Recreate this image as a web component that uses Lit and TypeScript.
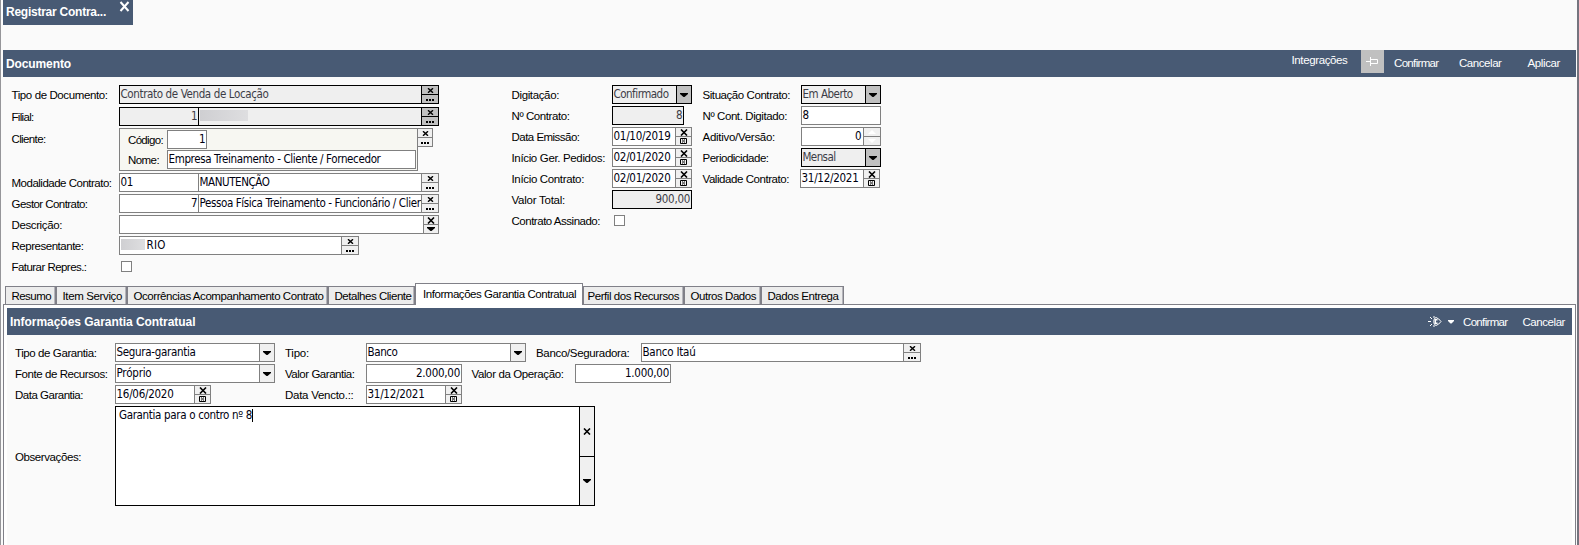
import { LitElement, html, css, svg, nothing } from "lit";
import { customElement, property } from "lit/decorators.js";
import { classMap } from "lit/directives/class-map.js";

/* Text run tracked so that it spans a given width. */
@customElement("fit-text")
class FitText extends LitElement {
  static styles = css`
    :host { display: inline-block; white-space: pre; flex: none; }
    .run { display: inline-block; white-space: pre; }
  `;
  @property() text = "";
  @property({ type: Number }) w = 0;
  updated() {
    const run = this.renderRoot.querySelector(".run") as HTMLElement;
    run.style.letterSpacing = "0px";
    const natural = run.getBoundingClientRect().width;
    if (this.w && natural) {
      run.style.letterSpacing = `${(this.w - natural) / this.text.length}px`;
    }
  }
  render() {
    return html`<span class="run">${this.text}</span>`;
  }
}

const ICONS: Record<string, unknown> = {
  xs: svg`<svg width="7" height="5" viewBox="0 0 7 5"><path d="M1 .3L6 4.7M6 .3L1 4.7" stroke="#000" stroke-width="1.5"/></svg>`,
  x: svg`<svg width="8" height="7" viewBox="0 0 8 7"><path d="M1 .5L7 6.5M7 .5L1 6.5" stroke="#000" stroke-width="1.6"/></svg>`,
  dots: svg`<svg width="8" height="6" viewBox="0 0 8 6"><path d="M0 3h2v2H0zM3 3h2v2H3zM6 3h2v2H6z"/></svg>`,
  down: svg`<svg width="8" height="4" viewBox="0 0 8 4"><path d="M0 0h8v1L4.5 4h-1L0 1z"/></svg>`,
  cal: svg`<svg width="7" height="6" viewBox="0 0 7 6"><path d="M.5 .5h6v5h-6z" fill="none" stroke="#000"/><path d="M2 1.5h1v1H2zM4 1.5h1v1H4zM3 2.5h1v1H3zM2 3.5h1v1H2zM4 3.5h1v1H4z"/></svg>`,
  up0: svg`<svg width="8" height="4" viewBox="0 0 8 4"><path d="M0 4L4 0l4 4z" fill="#fff"/></svg>`,
  down0: svg`<svg width="8" height="4" viewBox="0 0 8 4"><path d="M0 0L4 4l4-4z" fill="#fff"/></svg>`,
};

const BUTTONS: Record<string, string[]> = {
  lookup: ["xs", "dots"],
  date: ["x", "cal"],
  combo: ["down"],
  list: ["x", "down"],
  spin: ["up0", "down0"],
};

/* Width of each button stack, its left rule included. */
const STACK: Record<string, number> = { lookup: 17, date: 16, combo: 15, list: 15, spin: 17 };

@customElement("ux-field")
class UxField extends LitElement {
  static styles = css`
    :host { display: block; flex: none; --line: #808080; --face: #f0f0f0; }
    .box { box-sizing: border-box; height: 19px; display: flex; border: 1px solid var(--line); background: #fff;
      font: 11.5px/17px "DejaVu Sans Condensed", "DejaVu Sans", sans-serif; font-stretch: condensed; color: #000010; }
    .ro { --line: #000; --face: #c0c0c0; background: #efefef; color: #3c3c46; }
    .cell { flex: 1; min-width: 0; overflow: hidden; padding: 0 1px 0 0.5px; display: flex; }
    .code { flex: none; box-sizing: border-box; border-right: 1px solid var(--line); }
    .end { justify-content: flex-end; }
    .btns { flex: none; box-sizing: border-box; display: flex; flex-direction: column; gap: 1px; background: var(--line); border-left: 1px solid var(--line); }
    .btn { flex: 1; background: var(--face); display: flex; align-items: center; justify-content: center; min-height: 0; overflow: hidden; }
    .btn svg { flex: none; }
    .mask { flex: none; background: linear-gradient(90deg, #cfcfd2, #dedee0); height: 11px; margin: 2px 2px 0 0; }
  `;
  @property({ type: Number }) width = 80;
  @property() buttons = "";
  @property({ type: Boolean }) ro = false;
  @property({ type: Boolean }) end = false;
  @property() value = "";
  @property({ type: Number }) w = 0;
  @property() code = "";
  @property({ type: Boolean }) codeend = false;
  @property({ type: Number }) cw = 0;
  @property({ type: Number }) mask = 0;
  render() {
    return html`<div class=${classMap({ box: true, ro: this.ro })} style="width:${this.width}px">
      ${this.code
        ? html`<div class=${classMap({ cell: true, code: true, end: this.codeend })} style="width:79px"><fit-text .text=${this.code} .w=${this.cw}></fit-text></div>`
        : nothing}
      <div class=${classMap({ cell: true, end: this.end })}>
        ${this.mask ? html`<span class="mask" style="width:${this.mask}px"></span>` : nothing}
        ${this.value ? html`<fit-text .text=${this.value} .w=${this.w}></fit-text>` : nothing}
      </div>
      ${this.buttons
        ? html`<div class="btns" style="width:${STACK[this.buttons]}px">${BUTTONS[this.buttons].map((b) => html`<div class="btn">${ICONS[b]}</div>`)}</div>`
        : nothing}
    </div>`;
  }
}

@customElement("app-root")
class AppRoot extends LitElement {
  static styles = css`
    :host { display: block; width: 1579px; height: 545px; overflow: hidden; background: #fafafa;
      font: 11.5px/14px "Liberation Sans", Arial, sans-serif; color: #000; }
    .window { box-sizing: border-box; height: 545px; border-left: 1px solid #959599; border-right: 2px solid #74747e; padding-left: 2px; display: flex; flex-direction: column; }
    .doctab { width: 130px; height: 25px; box-sizing: border-box; background: #485a74; color: #fff; font-weight: bold; font-size: 12px; padding: 5px 0 0 3px; display: flex; justify-content: space-between; }
    .close { margin: -4px 3px 0 0; }
    .bar { height: 27px; flex: none; background: #485a74; color: #fff; display: flex; align-items: center; }
    .main { margin: 25px 1px 0 0; padding-left: 3px; }
    .title { font-weight: bold; font-size: 12px; }
    .actions { margin-left: auto; display: flex; align-items: center; height: 27px; }
    .raised { margin-bottom: 6px; }
    .pin { width: 23px; height: 23px; background: #c0c0c0; display: flex; align-items: center; justify-content: center; align-self: flex-start; margin: 0 10.5px 0 13px; }
    .gap { margin-left: 20.5px; }
    .gap2 { margin-left: 26px; margin-right: 16px; }
    .main .actions { padding-bottom: 1px; box-sizing: border-box; }
    .form { display: grid; grid-template-columns: 500px 191px 1fr; padding: 8px 0 0 8.5px; height: 193px; flex: none; box-sizing: border-box; }
    .col { display: flex; flex-direction: column; gap: 2px; }
    .row { display: flex; height: 19px; align-items: flex-start; }
    .label { flex: none; padding-top: 3px; }
    .shift { margin-left: -1px; }
    .gap3 { margin-top: 1px; }
    .client { height: 43px; }
    .client > .label { padding-top: 4px; }
    .group { width: 299px; height: 43px; box-sizing: border-box; border: 1px solid #808080; background: #f7f7f2; padding: 1px 1px 0 8px; display: flex; flex-direction: column; gap: 1px; }
    .groupbtns { width: 15px; height: 19px; box-sizing: border-box; border: 1px solid #808080; border-left: 0; background: #808080; display: grid; grid-template-rows: 1fr 1fr; gap: 1px; }
    .gbtn { background: #f0f0f0; display: flex; align-items: center; justify-content: center; min-height: 0; overflow: hidden; }
    .check { width: 11px; height: 11px; box-sizing: border-box; border: 1px solid #808080; background: #fff; margin: 4px 0 0 2px; }
    .tabs { display: flex; padding-left: 2px; height: 21px; align-items: flex-end; margin-top: 13px; position: relative; flex: none; }
    .tab { box-sizing: border-box; height: 18px; border: 1px solid #808088; border-bottom: 0; box-shadow: inset -1px 0 #b4b4ba; background: #ececec; padding: 2px 0 0 5.5px; }
    .tight { padding-left: 3.5px; }
    .active { height: 22px; margin-bottom: -1px; background: #fff; box-shadow: none; padding: 3px 0 0 7px; }
    .panel { flex: 1; border: 1px solid #808088; border-bottom: 0; background: #fff; padding: 3px 3px 0 3px; margin-right: 1px; display: flex; flex-direction: column; min-height: 0; }
    .panel .bar { padding-left: 3px; }
    .body { flex: 1; background: #fafafa; padding: 8px 0 0 8px; display: flex; flex-direction: column; gap: 2px; min-height: 0; }
    .sun { margin-right: 6px; }
    .caret { margin-right: 9px; }
    .gap4 { margin-left: 15px; margin-right: 7px; }
    .note { display: flex; align-items: flex-start; }
    .note .label { padding-top: 44px; }
    .area { box-sizing: border-box; width: 480px; height: 100px; border: 1px solid #000; background: #fff; display: grid; grid-template-columns: 1fr 15px;
      font: 11.5px/15px "DejaVu Sans Condensed", "DejaVu Sans", sans-serif; font-stretch: condensed; color: #000010; }
    .text { padding: 1px 0 0 3px; display: flex; }
    .cursor { width: 1px; height: 13px; background: #000; margin-top: 1px; }
    .side { border-left: 1px solid #000; background: #000; display: grid; grid-template-rows: 49px 1fr; gap: 1px; }
  `;

  label(text: string, w: number, col: number) {
    return html`<span class="label" style="width:${col}px"><fit-text .text=${text} .w=${w}></fit-text></span>`;
  }
  tab(text: string, tw: number, w: number, active = false, tight = false) {
    return html`<div class=${classMap({ tab: true, active, tight })} style="width:${w}px"><fit-text .text=${text} .w=${tw}></fit-text></div>`;
  }
  fit(text: string, w: number) {
    return html`<fit-text .text=${text} .w=${w}></fit-text>`;
  }

  render() {
    return html`<div class="window">
      <div class="doctab">${this.fit("Registrar Contra...", 100)}
        <svg class="close" width="11" height="11" viewBox="0 0 11 11"><path d="M1.5 1L9.5 10M9.5 1L1.5 10" stroke="#fff" stroke-width="2"/></svg>
      </div>
      <div class="bar main">
        <span class="title">${this.fit("Documento", 65)}</span>
        <div class="actions">
          <span class="raised">${this.fit("Integrações", 56)}</span>
          <span class="pin"><svg width="12" height="9" viewBox="0 0 12 9"><path d="M0 4.5h4.5M4.5 0v9M4.5 2.5h7v4h-7" fill="none" stroke="#fff"/></svg></span>
          ${this.fit("Confirmar", 44.5)}
          <span class="gap">${this.fit("Cancelar", 42.5)}</span>
          <span class="gap2">${this.fit("Aplicar", 32.5)}</span>
        </div>
      </div>

      <div class="form">
        <div class="col">
          <div class="row">${this.label("Tipo de Documento:", 96, 107.5)}<ux-field ro width="320" buttons="lookup" value="Contrato de Venda de Locação" w="148"></ux-field></div>
          <div class="row gap3">${this.label("Filial:", 22, 107.5)}<ux-field ro width="320" buttons="lookup" code="1" codeend cw="6" mask="48"></ux-field></div>
          <div class="row client">${this.label("Cliente:", 34, 107.5)}
            <div class="group">
              <div class="row">${this.label("Código:", 35, 39)}<ux-field width="40" end value="1" w="6"></ux-field></div>
              <div class="row">${this.label("Nome:", 31, 39)}<ux-field width="249" value="Empresa Treinamento - Cliente / Fornecedor" w="212"></ux-field></div>
            </div>
            <div class="groupbtns"><div class="gbtn">${ICONS.xs}</div><div class="gbtn">${ICONS.dots}</div></div>
          </div>
          <div class="row">${this.label("Modalidade Contrato:", 100, 107.5)}<ux-field width="320" buttons="lookup" code="01" cw="12.5" value="MANUTENÇÃO" w="70"></ux-field></div>
          <div class="row">${this.label("Gestor Contrato:", 76, 107.5)}<ux-field width="320" buttons="lookup" code="7" codeend cw="6" value="Pessoa Física Treinamento - Funcionário / Cliente" w="233"></ux-field></div>
          <div class="row">${this.label("Descrição:", 50.5, 107.5)}<ux-field width="320" buttons="list"></ux-field></div>
          <div class="row">${this.label("Representante:", 72, 107.5)}<ux-field width="240" buttons="lookup" mask="24" value="RIO" w="19"></ux-field></div>
          <div class="row">${this.label("Faturar Repres.:", 75, 107.5)}<span class="check"></span></div>
        </div>
        <div class="col">
          <div class="row">${this.label("Digitação:", 47.5, 100.5)}<ux-field ro width="80" buttons="combo" value="Confirmado" w="55"></ux-field></div>
          <div class="row">${this.label("Nº Contrato:", 58, 100.5)}<ux-field ro width="72" end value="8" w="6"></ux-field></div>
          <div class="row">${this.label("Data Emissão:", 68, 100.5)}<ux-field width="80" buttons="date" value="01/10/2019" w="57"></ux-field></div>
          <div class="row">${this.label("Início Ger. Pedidos:", 93.5, 100.5)}<ux-field width="80" buttons="date" value="02/01/2020" w="57"></ux-field></div>
          <div class="row">${this.label("Início Contrato:", 72.5, 100.5)}<ux-field width="80" buttons="date" value="02/01/2020" w="57"></ux-field></div>
          <div class="row">${this.label("Valor Total:", 53.5, 100.5)}<ux-field ro width="80" end value="900,00" w="34.5"></ux-field></div>
          <div class="row">${this.label("Contrato Assinado:", 88.5, 100.5)}<span class="check"></span></div>
        </div>
        <div class="col">
          <div class="row">${this.label("Situação Contrato:", 87.5, 98.5)}<ux-field ro width="80" buttons="combo" value="Em Aberto" w="50"></ux-field></div>
          <div class="row">${this.label("Nº Cont. Digitado:", 84.5, 98.5)}<ux-field width="80" value="8" w="6"></ux-field></div>
          <div class="row">${this.label("Aditivo/Versão:", 72.5, 98.5)}<ux-field width="80" buttons="spin" end value="0" w="7"></ux-field></div>
          <div class="row">${this.label("Periodicidade:", 66, 98.5)}<ux-field ro width="80" buttons="combo" value="Mensal" w="33"></ux-field></div>
          <div class="row">${this.label("Validade Contrato:", 86.5, 98.5)}<ux-field class="shift" width="80" buttons="date" value="31/12/2021" w="57"></ux-field></div>
        </div>
      </div>

      <div class="tabs">
        ${this.tab("Resumo", 39.5, 51)}${this.tab("Item Serviço", 59.5, 71)}${this.tab("Ocorrências Acompanhamento Contrato", 190, 201)}${this.tab("Detalhes Cliente", 77, 87)}${this.tab("Informações Garantia Contratual", 153, 168, true)}${this.tab("Perfil dos Recursos", 91.5, 101, false, true)}${this.tab("Outros Dados", 65.5, 77)}${this.tab("Dados Entrega", 71, 83)}
      </div>
      <div class="panel">
        <div class="bar">
          <span class="title">${this.fit("Informações Garantia Contratual", 185.5)}</span>
          <div class="actions">
            <svg class="sun" width="14" height="11" viewBox="0 0 14 11"><path d="M0 5.5h3M2 1l2 2M2 10l2-2M6 0v2M6 9v2M8 1.5c-3 1-3 7 0 8M8 1.5q3 1 5 4q-2 3-5 4" fill="none" stroke="#fff"/><path d="M6.5 3h3v5h-3z" fill="#fff"/><path d="M8 4.5h2v2H8z" fill="#485a74"/></svg>
            <svg class="caret" width="6" height="4" viewBox="0 0 6 4"><path d="M0 0h6v1L3.5 3.5h-1L0 1z" fill="#fff"/></svg>
            ${this.fit("Confirmar", 44.5)}
            <span class="gap4">${this.fit("Cancelar", 42.5)}</span>
          </div>
        </div>
        <div class="body">
          <div class="row">
            ${this.label("Tipo de Garantia:", 81.5, 100)}<ux-field width="160" buttons="combo" value="Segura-garantia" w="79"></ux-field>
            <span style="width:10px"></span>${this.label("Tipo:", 24, 81)}<ux-field width="160" buttons="combo" value="Banco" w="30"></ux-field>
            <span style="width:10px"></span>${this.label("Banco/Seguradora:", 93.5, 105)}<ux-field width="280" buttons="lookup" value="Banco Itaú" w="53"></ux-field>
          </div>
          <div class="row">
            ${this.label("Fonte de Recursos:", 92.5, 100)}<ux-field width="160" buttons="combo" value="Próprio" w="35"></ux-field>
            <span style="width:10px"></span>${this.label("Valor Garantia:", 69.5, 81)}<ux-field width="96" end value="2.000,00" w="44"></ux-field>
            <span style="width:9.5px"></span>${this.label("Valor da Operação:", 92, 103.5)}<ux-field width="96" end value="1.000,00" w="44"></ux-field>
          </div>
          <div class="row">
            ${this.label("Data Garantia:", 68, 100)}<ux-field width="96" buttons="date" value="16/06/2020" w="57"></ux-field>
            <span style="width:74px"></span>${this.label("Data Vencto.::", 68.5, 81)}<ux-field width="96" buttons="date" value="31/12/2021" w="57"></ux-field>
          </div>
          <div class="note">
            ${this.label("Observações:", 66, 100)}
            <div class="area">
              <div class="text">${this.fit("Garantia para o contro nº 8", 133)}<span class="cursor"></span></div>
              <div class="side"><div class="gbtn">${ICONS.x}</div><div class="gbtn">${ICONS.down}</div></div>
            </div>
          </div>
        </div>
      </div>
    </div>`;
  }
}
